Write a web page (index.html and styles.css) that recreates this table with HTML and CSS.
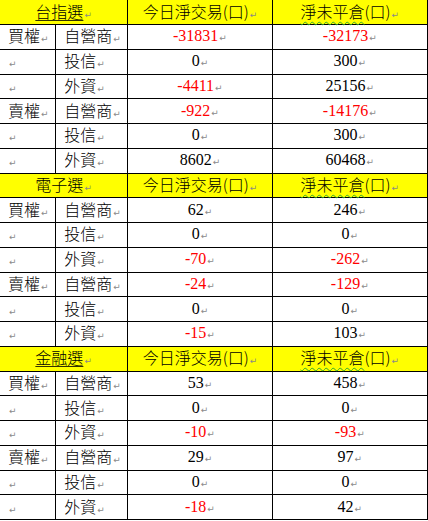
FILE: index.html
```html
<!DOCTYPE html>
<html>
<head>
<meta charset="utf-8">
<link rel="stylesheet" href="styles.css">
</head>
<body>
<table class="grid">
<colgroup><col class="c1"><col class="c2"><col class="c3"><col class="c4"></colgroup>
<tbody>
<tr class="head first"><td colspan="2" class="ctr"><span class="ul">台指選</span><span class="pm">↵</span></td><td class="ctr">今日淨交易(口)<span class="pm">↵</span></td><td class="ctr"><span class="wavy">淨未平倉</span>(口)<span class="pm">↵</span></td></tr>
<tr><td>買權<span class="pm">↵</span></td><td>自營商<span class="pm">↵</span></td><td class="num neg">-31831<span class="pm">↵</span></td><td class="num neg">-32173<span class="pm">↵</span></td></tr>
<tr><td><span class="pm">↵</span></td><td>投信<span class="pm">↵</span></td><td class="num">0<span class="pm">↵</span></td><td class="num">300<span class="pm">↵</span></td></tr>
<tr><td><span class="pm">↵</span></td><td>外資<span class="pm">↵</span></td><td class="num neg">-4411<span class="pm">↵</span></td><td class="num">25156<span class="pm">↵</span></td></tr>
<tr><td>賣權<span class="pm">↵</span></td><td>自營商<span class="pm">↵</span></td><td class="num neg">-922<span class="pm">↵</span></td><td class="num neg">-14176<span class="pm">↵</span></td></tr>
<tr><td><span class="pm">↵</span></td><td>投信<span class="pm">↵</span></td><td class="num">0<span class="pm">↵</span></td><td class="num">300<span class="pm">↵</span></td></tr>
<tr><td><span class="pm">↵</span></td><td>外資<span class="pm">↵</span></td><td class="num">8602<span class="pm">↵</span></td><td class="num">60468<span class="pm">↵</span></td></tr>
<tr class="head"><td colspan="2" class="ctr">電子選<span class="pm">↵</span></td><td class="ctr">今日淨交易(口)<span class="pm">↵</span></td><td class="ctr"><span class="wavy">淨未平倉</span>(口)<span class="pm">↵</span></td></tr>
<tr><td>買權<span class="pm">↵</span></td><td>自營商<span class="pm">↵</span></td><td class="num">62<span class="pm">↵</span></td><td class="num">246<span class="pm">↵</span></td></tr>
<tr><td><span class="pm">↵</span></td><td>投信<span class="pm">↵</span></td><td class="num">0<span class="pm">↵</span></td><td class="num">0<span class="pm">↵</span></td></tr>
<tr><td><span class="pm">↵</span></td><td>外資<span class="pm">↵</span></td><td class="num neg">-70<span class="pm">↵</span></td><td class="num neg">-262<span class="pm">↵</span></td></tr>
<tr><td>賣權<span class="pm">↵</span></td><td>自營商<span class="pm">↵</span></td><td class="num neg">-24<span class="pm">↵</span></td><td class="num neg">-129<span class="pm">↵</span></td></tr>
<tr><td><span class="pm">↵</span></td><td>投信<span class="pm">↵</span></td><td class="num">0<span class="pm">↵</span></td><td class="num">0<span class="pm">↵</span></td></tr>
<tr><td><span class="pm">↵</span></td><td>外資<span class="pm">↵</span></td><td class="num neg">-15<span class="pm">↵</span></td><td class="num">103<span class="pm">↵</span></td></tr>
<tr class="head"><td colspan="2" class="ctr"><span class="ul">金融選</span><span class="pm">↵</span></td><td class="ctr">今日淨交易(口)<span class="pm">↵</span></td><td class="ctr"><span class="wavy">淨未平倉</span>(口)<span class="pm">↵</span></td></tr>
<tr><td>買權<span class="pm">↵</span></td><td>自營商<span class="pm">↵</span></td><td class="num">53<span class="pm">↵</span></td><td class="num">458<span class="pm">↵</span></td></tr>
<tr><td><span class="pm">↵</span></td><td>投信<span class="pm">↵</span></td><td class="num">0<span class="pm">↵</span></td><td class="num">0<span class="pm">↵</span></td></tr>
<tr><td><span class="pm">↵</span></td><td>外資<span class="pm">↵</span></td><td class="num neg">-10<span class="pm">↵</span></td><td class="num neg">-93<span class="pm">↵</span></td></tr>
<tr><td>賣權<span class="pm">↵</span></td><td>自營商<span class="pm">↵</span></td><td class="num">29<span class="pm">↵</span></td><td class="num">97<span class="pm">↵</span></td></tr>
<tr><td><span class="pm">↵</span></td><td>投信<span class="pm">↵</span></td><td class="num">0<span class="pm">↵</span></td><td class="num">0<span class="pm">↵</span></td></tr>
<tr><td><span class="pm">↵</span></td><td>外資<span class="pm">↵</span></td><td class="num neg">-18<span class="pm">↵</span></td><td class="num">42<span class="pm">↵</span></td></tr>
</tbody>
</table>
</body>
</html>
```
FILE: styles.css
```css
html, body {
  margin: 0;
  padding: 0;
  background: #ffffff;
}
.grid {
  border-collapse: collapse;
  table-layout: fixed;
  width: 429px;
  margin: -1px 0 0 -1px;
  font-family: "Noto Sans CJK TC", "Liberation Serif", sans-serif;
  font-weight: 300;
  font-size: 16px;
  color: #000000;
}
.c1 { width: 56px; }
.c2 { width: 72px; }
.c3 { width: 144px; }
.c4 { width: 155px; }
.grid td {
  border: 1px solid #000000;
  height: 22.76px;
  padding: 1px 0 0 8px;
  line-height: 18px;
  white-space: nowrap;
  vertical-align: middle;
}
.head td {
  background: #ffff00;
}
.grid td.ctr, .grid td.num {
  text-align: center;
  padding: 1px 0 0 0;
}
.grid .first td.ctr {
  height: 21.76px;
  padding-top: 2px;
}
.num {
  font-family: "Liberation Serif", serif;
  font-weight: 400;
  font-size: 16px;
}
.neg { color: #ff0000; }
.pm {
  font-family: "DejaVu Sans", sans-serif;
  font-weight: 400;
  font-size: 9px;
  color: #8a8a8a;
  margin-left: 1px;
}
.ul {
  text-decoration: underline #333300;
  text-underline-offset: 2px;
}
.wavy {
  text-decoration: underline wavy #2fa82f;
  text-decoration-thickness: 1px;
  text-underline-offset: 3px;
}
```
